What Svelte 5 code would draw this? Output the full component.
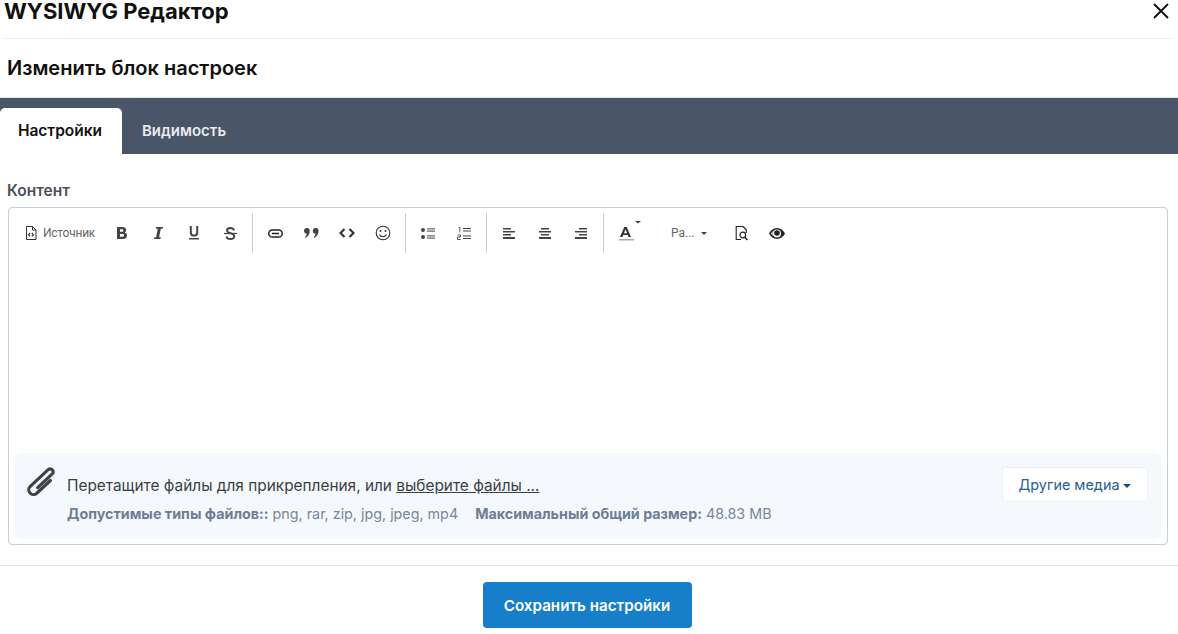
<script>
  const tabs = ["Настройки", "Видимость"];
  let active = $state(0);
</script>

<div class="modal">
  <header class="top">
    <h2>WYSIWYG Редактор</h2>
    <button class="close" aria-label="Закрыть">
      <svg width="16" height="16" viewBox="0 0 16 16"><path d="M1 1l14 14M15 1L1 15" stroke="#111" stroke-width="1.9" fill="none"/></svg>
    </button>
  </header>

  <h3 class="sub">Изменить блок настроек</h3>

  <nav class="tabs">
    {#each tabs as tab, i}
      <button class="tab" class:active={i === active} onclick={() => (active = i)}>{tab}</button>
    {/each}
  </nav>

  <section class="body">
    <div class="label">Контент</div>
    <div class="editor">
      <div class="toolbar">
        <div class="group first">
          <button class="tool source">
            <svg width="12" height="14" viewBox="0 0 12 14" fill="none" stroke="#333" stroke-width="1"><path d="M1.500.5h6l3.500 3.500v9.500h-9.500z"/><path d="M7.500.5v3.500h3.500"/><path d="M5.200 7L3.500 8.700l1.700 1.700M6.800 7l1.700 1.700-1.700 1.700" stroke-width="1.200"/></svg>
            <span>Источник</span>
          </button>
          <button class="tool" aria-label="Bold"><svg width="10" height="12" viewBox="0 0 10 12"><path fill="#444" fill-rule="evenodd" d="M0 0h5.200C7.700 0 9.200 1.100 9.200 3c0 1.200-.6 2-1.600 2.500 1.500.4 2.400 1.400 2.400 2.900C10 10.700 8.300 12 5.800 12H0zM3 2.300v2.500h2c.9 0 1.300-.4 1.300-1.300S5.800 2.300 5 2.300zM3 7v2.700h2.500c1 0 1.500-.5 1.500-1.400S6.400 7 5.500 7z"/></svg></button>
          <button class="tool" aria-label="Italic"><svg width="9" height="12" viewBox="0 0 9 12"><path fill="#444" d="M2.200 0H9l-.4 1.800H6.800L5.100 10.200h1.700L6.400 12H0l.4-1.800h1.700L3.800 1.800H1.800z"/></svg></button>
          <button class="tool" aria-label="Underline"><svg width="10" height="14" viewBox="0 0 10 14"><path fill="none" stroke="#444" stroke-width="2" d="M1.800 0v6.400c0 2.200 1.100 3.200 3.200 3.200s3.200-1 3.200-3.200V0"/><path fill="#444" d="M0 12h10v1.500H0z"/></svg></button>
          <button class="tool" aria-label="Strike"><svg width="13" height="13" viewBox="0 0 13 13"><path fill="none" stroke="#444" stroke-width="1.900" d="M10 3.400C9.600 1.900 8.300 1 6.400 1 4.400 1 3 2 3 3.500c0 3.400 7.200 2 7.200 5.700C10.200 10.900 8.600 12 6.400 12c-2.200 0-3.600-1-4-2.600"/><path stroke="#444" stroke-width="1.300" d="M0 6.500h13"/></svg></button>
        </div>
        <div class="group">
          <button class="tool" aria-label="Link"><svg width="15" height="9" viewBox="0 0 15 9" fill="none" stroke="#222" stroke-width="1.500"><rect x=".75" y=".9" width="13.500" height="7.200" rx="3.600"/><path d="M4 4.500h7"/></svg></button>
          <button class="tool" aria-label="Quote"><svg width="15" height="10" viewBox="0 0 15 10"><path fill="#444" d="M0 2.800a2.800 2.800 0 0 1 5.800 0C5.800 6 4 9 1.500 10l-.6-1c1-.7 1.600-1.500 1.800-3.300A2.800 2.800 0 0 1 0 2.800zm8.800 0a2.800 2.800 0 0 1 5.800 0c0 3.200-1.800 6.200-4.300 7.200l-.6-1c1-.7 1.600-1.500 1.800-3.300a2.800 2.800 0 0 1-2.700-2.900z"/></svg></button>
          <button class="tool" aria-label="Code"><svg width="16" height="10" viewBox="0 0 16 10" fill="none" stroke="#333" stroke-width="2.200"><path d="M5.500 1L1.500 5l4 4M10.500 1l4 4-4 4"/></svg></button>
          <button class="tool" aria-label="Emoji"><svg width="16" height="16" viewBox="0 0 16 16" fill="none" stroke="#333" stroke-width="1.100"><circle cx="8" cy="8" r="6.800"/><circle cx="5.500" cy="6" r="1" fill="#333" stroke="none"/><circle cx="10.500" cy="6" r="1" fill="#333" stroke="none"/><path d="M4.500 9.500c.8 1.500 2 2.200 3.500 2.200s2.700-.7 3.500-2.200" stroke-width="1.300"/></svg></button>
        </div>
        <div class="group">
          <button class="tool" aria-label="Bullets"><svg width="14" height="11" viewBox="0 0 14 11"><circle cx="2" cy="2" r="2" fill="#444"/><circle cx="2" cy="9" r="2" fill="#444"/><path stroke="#444" stroke-width="1" d="M6 .9h8M6 3.100h8M6 7.900h8M6 10.100h8"/></svg></button>
          <button class="tool" aria-label="Numbers"><svg width="14" height="13" viewBox="0 0 14 13" fill="none" stroke="#444"><path d="M1.500.5h1.300v5" stroke-width=".9"/><path d="M.5 8h3v2h-3v2.500h3.200" stroke-width=".9"/><path stroke-width="1" d="M6 1.500h8M6 4h8M6 9h8M6 11.500h8"/></svg></button>
        </div>
        <div class="group">
          <button class="tool" aria-label="Left"><svg width="12" height="11" viewBox="0 0 12 11"><path fill="#444" d="M0 0h8v1.500H0zM0 3h12v1.500H0zM0 6h8v1.500H0zM0 9h12v2H0z"/></svg></button>
          <button class="tool" aria-label="Center"><svg width="12" height="11" viewBox="0 0 12 11"><path fill="#444" d="M2 0h8v1.500H2zM0 3h12v1.500H0zM2 6h8v1.500H2zM0 9h12v2H0z"/></svg></button>
          <button class="tool" aria-label="Right"><svg width="12" height="11" viewBox="0 0 12 11"><path fill="#444" d="M4 0h8v1.500H4zM0 3h12v1.500H0zM4 6h8v1.500H4zM0 9h12v2H0z"/></svg></button>
        </div>
        <div class="group last">
          <button class="tool color" aria-label="Color">
            <svg width="26" height="24" viewBox="0 0 26 24"><path fill="#333" fill-rule="evenodd" d="M4 16L8.300 6h2.400l4.300 10h-2.500l-.7-2H7.200l-.7 2zm3.900-3.800h3.200L9.500 8.200z"/><path fill="#aaa" d="M3 18h15v1.500H3z"/><path fill="#444" d="M19 0h6l-3 2.500z"/></svg>
          </button>
          <button class="tool para"><span>Pa...</span><i class="caret"></i></button>
          <button class="tool" aria-label="Preview"><svg width="13" height="15" viewBox="0 0 13 15" fill="none" stroke="#222"><path d="M8 .5H1.200v13H6M8 .5l3.300 3.300V7" stroke-width="1.100"/><circle cx="7.800" cy="9" r="2.800" stroke-width="1.200"/><path d="M9.800 11l2.500 3" stroke-width="1.500"/></svg></button>
          <button class="tool" aria-label="Eye"><svg width="16" height="11" viewBox="0 0 16 11"><path fill="#222" fill-rule="evenodd" d="M8 0c3.500 0 6.300 2.300 8 5.500C14.300 8.700 11.500 11 8 11S1.700 8.700 0 5.500C1.700 2.300 4.500 0 8 0zM8 1.500A4 4 0 0 0 4 5.500a4 4 0 0 0 8 0 4 4 0 0 0-4-4zM2 5.500c.8 1.300 1.500 2.100 2.500 2.800a5 5 0 0 1 0-5.600C3.500 3.400 2.800 4.200 2 5.500z"/><circle cx="8" cy="5" r="2.800" fill="#222"/></svg></button>
        </div>
      </div>

      <div class="writing"></div>

      <div class="attach">
        <svg class="clip" width="28" height="30" viewBox="0 0 28 30" fill="none" stroke="#3d4246" stroke-width="3.100" stroke-linecap="round"><path d="M23.400 13.500L9.530 26.470A4.750 4.750 0 0 1 3.070 19.530L21.160 2.610A3 3 0 0 1 25.240 6.990L10.640 20.590"/></svg>
        <div class="info">
          <div class="drop">Перетащите файлы для прикрепления, или <u>выберите файлы ...</u></div>
          <div class="meta">
            <span><b>Допустимые типы файлов::</b> png, rar, zip, jpg, jpeg, mp4</span>
            <span><b>Максимальный общий размер:</b> 48.83 MB</span>
          </div>
        </div>
        <button class="media">Другие медиа<i class="caret big"></i></button>
      </div>
    </div>
  </section>

  <footer class="foot">
    <button class="save">Сохранить настройки</button>
  </footer>
</div>

<style>
  :global(body) {
    background: #fff;
    font-family: Inter, "Liberation Sans", sans-serif;
    overflow: hidden;
  }

  button {
    font-family: inherit;
    border: 0;
    background: none;
    padding: 0;
    cursor: pointer;
  }

  .modal {
    width: 1178px;
    height: 634px;
    display: flex;
    flex-direction: column;
  }

  .top {
    height: 38px;
    margin: 0 6px 0 3px;
    padding-left: 1px;
    border-bottom: 1px solid #edeff2;
    display: flex;
    justify-content: space-between;
    box-sizing: content-box;
  }

  .top h2 {
    margin: 0;
    font-size: 22px;
    line-height: 23px;
    font-weight: 700;
    color: #111;
  }

  .close {
    height: 22px;
    width: 16px;
    margin-right: 3px;
    display: flex;
    align-items: center;
  }

  .sub {
    margin: 0;
    padding: 17px 7px 0;
    height: 41px;
    font-size: 20px;
    line-height: 24px;
    font-weight: 600;
    color: #111;
    box-sizing: content-box;
  }

  .tabs {
    background: #4a5568;
    border-top: 1px solid #e2e5ea;
    height: 46px;
    padding-top: 10px;
    display: flex;
    box-sizing: content-box;
  }

  .tab {
    width: 122px;
    height: 46px;
    padding-bottom: 2px;
    color: #e8ebf0;
    font-size: 15px;
    font-weight: 600;
    border-radius: 5px 5px 0 0;
  }

  .tab + .tab {
    width: 124px;
  }

  .tab.active {
    background: #fff;
    color: #111;
    font-size: 15.500px;
    padding-right: 2px;
  }

  .body {
    padding: 28px 10px 0 8px;
  }

  .label {
    font-size: 15.500px;
    line-height: 18px;
    font-weight: 600;
    color: #4a4f57;
    margin: 0 0 7px -1px;
  }

  .editor {
    height: 338px;
    border: 1px solid #c9ced9;
    border-radius: 4px;
    box-sizing: border-box;
    display: flex;
    flex-direction: column;
    padding: 5px;
  }

  .toolbar {
    display: flex;
    height: 40px;
  }

  .group {
    display: flex;
    align-items: center;
    padding: 0 4px;
    border-right: 1px solid #c9ced9;
  }

  .group.last {
    border-right: 0;
  }

  .tool {
    width: 36px;
    height: 40px;
    flex: none;
    display: flex;
    align-items: center;
    justify-content: center;
  }

  .tool.source {
    width: 86px;
    gap: 6px;
    padding-left: 7px;
    justify-content: flex-start;
    font-family: Roboto, sans-serif;
    font-size: 12px;
    color: #666;
    letter-spacing: -0.25px;
  }

  .tool.color {
    width: 52px;
    padding-left: 8px;
    justify-content: flex-start;
  }

  .tool.para {
    width: 63px;
    gap: 6px;
    padding-left: 11px;
    justify-content: flex-start;
    font-family: Roboto, sans-serif;
    font-size: 12px;
    color: #666;
  }

  .caret {
    width: 0;
    height: 0;
    border: 3px solid transparent;
    border-top-color: #444;
    border-bottom: 0;
  }

  .caret.big {
    display: inline-block;
    border-width: 4.500px;
    border-bottom: 0;
    border-top-color: #0f4f80;
    margin-left: 4px;
    vertical-align: 2px;
  }

  .writing {
    flex: 1;
  }

  .attach {
    height: 86px;
    background: #f5f9fd;
    border-radius: 8px;
    display: flex;
    align-items: flex-start;
    padding: 14px 14px 0 12px;
    box-sizing: border-box;
  }

  .clip {
    margin: 0 12px 0 1px;
    flex: none;
  }

  .info {
    flex: 1;
    padding-top: 9px;
  }

  .drop {
    font-size: 15.400px;
    line-height: 20px;
    color: #3a3f47;
  }

  .meta {
    margin-top: 9px;
    display: flex;
    gap: 17px;
    font-size: 14.300px;
    line-height: 18px;
    color: #7a8699;
  }

  .meta b {
    font-weight: 700;
    color: #6f7d96;
  }

  .media {
    width: 146px;
    height: 35px;
    background: #fff;
    border: 1px solid #edf1f5;
    border-radius: 3px;
    color: #26608f;
    font-size: 14.400px;
  }

  .foot {
    margin-top: 20px;
    border-top: 1px solid #e0e3e8;
    padding: 16px 4px 0 0;
    display: flex;
    justify-content: center;
  }

  .save {
    width: 209px;
    height: 46px;
    background: #177ec9;
    color: #fff;
    border-radius: 4px;
    font-size: 15.200px;
    font-weight: 600;
  }
</style>
